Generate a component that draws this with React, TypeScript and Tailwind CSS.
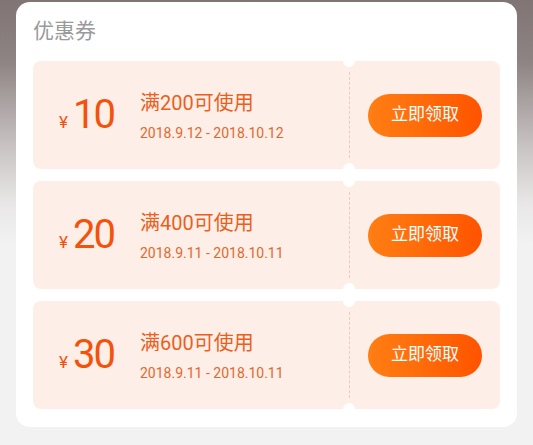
import React from "react";

const coupons = [
  { amount: "10", cond: "满200可使用", date: "2018.9.12 - 2018.10.12" },
  { amount: "20", cond: "满400可使用", date: "2018.9.11 - 2018.10.11" },
  { amount: "30", cond: "满600可使用", date: "2018.9.11 - 2018.10.11" },
];

function Coupon({ amount, cond, date }: { amount: string; cond: string; date: string }) {
  return (
    <div className="relative flex h-[108px] rounded-[8px] bg-[#fdeee8]">
      <div className="flex w-[316px] items-center">
        <div className="flex w-[107px] items-baseline pl-[26px]">
          <span className="text-[17px] leading-none text-[#f4520b]">¥</span>
          <span className="ml-[5px] text-[40px] leading-none tracking-[-2px] text-[#f4520b]">{amount}</span>
        </div>
        <div className="flex flex-col gap-[8px] pt-[1px]">
          <div className="text-[20px] leading-[26px] text-[#ea5f1c]">{cond}</div>
          <div className="text-[14px] leading-[18px] text-[#df6a2e]">{date}</div>
        </div>
      </div>
      <div className="my-[11px] border-l border-dashed border-[#efc9bd]" />
      <div className="flex flex-1 items-center justify-center">
        <button className="h-[43px] w-[114px] rounded-full bg-gradient-to-r from-[#ff7e12] to-[#ff5300] text-[17px] text-white">
          立即领取
        </button>
      </div>
      <div className="absolute left-[310px] top-[-6px] h-[12px] w-[12px] rounded-full bg-white" />
      <div className="absolute bottom-[-6px] left-[310px] h-[12px] w-[12px] rounded-full bg-white" />
    </div>
  );
}

export default function App() {
  return (
    <div
      className="h-[445px] w-[533px] overflow-hidden bg-[linear-gradient(to_bottom,#807474_0%,#8f8484_14%,#c9c3c3_33%,#e9e7e7_46%,#f2f2f2_55%,#f2f2f2_100%)] pt-[2px]"
      style={{ fontFamily: 'Roboto, "Noto Sans CJK SC", sans-serif' }}
    >
      <div className="mx-[16px] h-[425px] rounded-[14px] bg-white px-[17px] pt-[15px]">
        <div className="mb-[16px] text-[21px] leading-[28px] text-[#9a9a9a]">优惠券</div>
        <div className="flex flex-col gap-[12px]">
          {coupons.map((c) => (
            <Coupon key={c.amount} {...c} />
          ))}
        </div>
      </div>
    </div>
  );
}
